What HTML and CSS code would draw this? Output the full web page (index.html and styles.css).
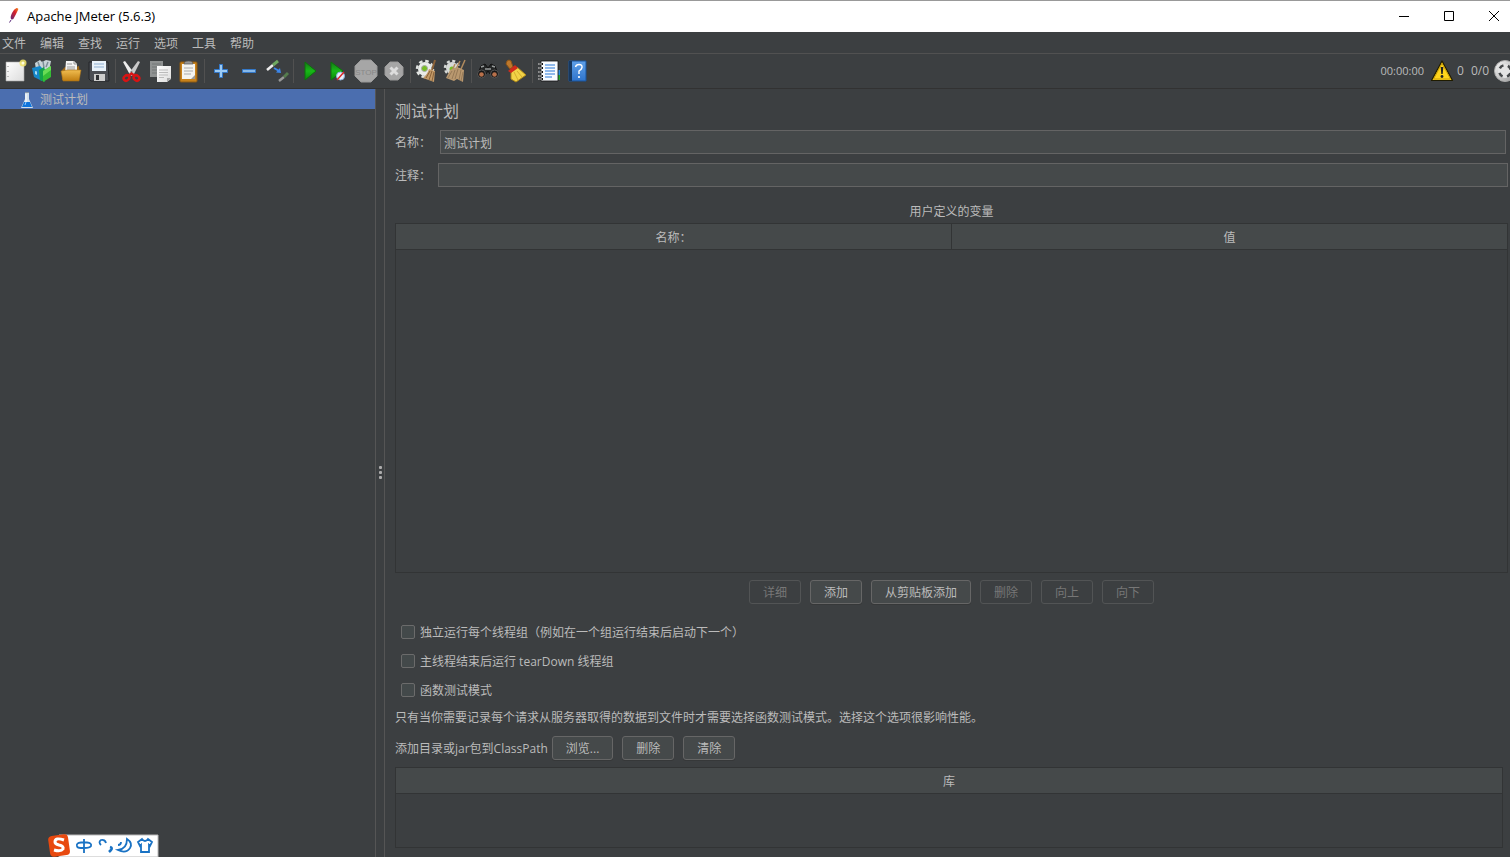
FILE: index.html
```html
<!DOCTYPE html>
<html lang="zh-CN">
<head>
<meta charset="utf-8">
<title>Apache JMeter (5.6.3)</title>
<link rel="stylesheet" href="styles.css">
</head>
<body>
<svg class="defs" aria-hidden="true">
  <defs>
    <linearGradient id="paper" x1="0" y1="0" x2="1" y2="1"><stop offset="0" stop-color="#fff"/><stop offset="1" stop-color="#dcdcdc"/></linearGradient>
    <linearGradient id="gold" x1="0" y1="0" x2="0" y2="1"><stop offset="0" stop-color="#f0bd50"/><stop offset="1" stop-color="#c07d10"/></linearGradient>
    <linearGradient id="green" x1="0" y1="0" x2="0" y2="1"><stop offset="0" stop-color="#157a15"/><stop offset=".5" stop-color="#18b818"/><stop offset="1" stop-color="#0a8a0a"/></linearGradient>
    <linearGradient id="blue" x1="0" y1="0" x2="0" y2="1"><stop offset="0" stop-color="#5fa0e8"/><stop offset="1" stop-color="#2f74cc"/></linearGradient>
    <linearGradient id="feather" x1="1" y1="0" x2="0" y2="1"><stop offset="0" stop-color="#f58a1f"/><stop offset=".4" stop-color="#d8222a"/><stop offset="1" stop-color="#5c2a7c"/></linearGradient>
    <linearGradient id="steel" x1="0" y1="0" x2="1" y2="1"><stop offset="0" stop-color="#f8f8f8"/><stop offset="1" stop-color="#999"/></linearGradient>
  </defs>
</svg>

<header class="titlebar">
  <svg class="app-icon" viewBox="0 0 16 16"><path d="M11.500 0Q14 0 13 2L10 8Q8 13 6 11Q5 9 7 5Q9 1 11.500 0Z" fill="url(#feather)"/><path d="M6 12L4.500 14.500" stroke="#5c2a7c" stroke-width="1"/></svg>
  <h1 class="app-title">Apache JMeter (5.6.3)</h1>
  <button class="win-btn" aria-label="最小化"><svg viewBox="0 0 10 10"><path d="M0 5.500H10"/></svg></button>
  <button class="win-btn" aria-label="最大化"><svg viewBox="0 0 10 10"><path d="M.5 .5H9.500V9.500H.5Z"/></svg></button>
  <button class="win-btn" aria-label="关闭"><svg viewBox="0 0 10 10"><path d="M0 0L10 10M10 0L0 10"/></svg></button>
</header>

<nav class="menubar">
  <button>文件</button><button>编辑</button><button>查找</button><button>运行</button><button>选项</button><button>工具</button><button>帮助</button>
</nav>

<div class="toolbar">
  <button class="tool" aria-label="新建"><svg viewBox="0 0 24 24"><path d="M3 3H21V22H3Z" fill="url(#paper)" stroke="#aaa" stroke-width=".6"/><path d="M5 7V8M5 12V13M5 17V18" stroke="#aaa" stroke-width="1.500"/><circle cx="20" cy="4" r="3.500" fill="#f1e46a" opacity=".85"/><circle cx="20" cy="4" r="1.500" fill="#fffde0"/></svg></button>
  <button class="tool" aria-label="模板"><svg viewBox="0 0 24 24"><path d="M4 4L9 1L11 3L15 1L20 2L18 12L5 11Z" fill="#c8d4d8"/><path d="M7 3L9 9M12 2L13 9M17 3L15 8" stroke="#7c8d96" stroke-width="1.500"/><path d="M1 9L9 7L11 9V22L3 18Z" fill="#1687c9"/><path d="M4 12L6 12.500V16L4 15Z" fill="#a5dcf5"/><path d="M8 11L13 8L14 11V23L9 21Z" fill="#13a34b"/><path d="M12 12L20 7V18L12 23Z" fill="#35bd35"/><path d="M12 12L20 7V11L12 17Z" fill="#69dc55"/></svg></button>
  <button class="tool" aria-label="打开"><svg viewBox="0 0 24 24"><path d="M3 11L6 8H17L20 7L21 18L18 21H3Z" fill="#9b6718"/><path d="M7 2H15L18 5V14H6Z" fill="#f3f3f3"/><path d="M15 2V5H18M8 5H13M8 8H16M8 10H16" stroke="#999" fill="none"/><path d="M2 12L9 11H22L20 22H4Z" fill="url(#gold)" stroke="#a87015" stroke-width=".6"/></svg></button>
  <button class="tool" aria-label="保存"><svg viewBox="0 0 24 24"><path d="M2 3H21L22 22H4L2 20Z" fill="#4b4e54" stroke="#25272b"/><path d="M5 2H19V12H5Z" fill="#e9f2fa"/><path d="M7 5H17M7 8H17" stroke="#8fafd2"/><path d="M7 15H18V22H7Z" fill="#ccc"/><path d="M9 16H12V21H9Z" fill="#303236"/></svg></button>
  <span class="sep"></span>
  <button class="tool" aria-label="剪切"><svg viewBox="0 0 24 24"><path d="M3 3L5 2L14 14L12 17L9 14Z" fill="#eee"/><path d="M20 3L18 2L9 14L11 17L14 15Z" fill="#c9c9c9"/><circle cx="11.500" cy="13" r="1" fill="#777"/><g fill="none" stroke="#d81414" stroke-width="2.500"><ellipse cx="6.500" cy="19" rx="3" ry="2.500" transform="rotate(-40 6.500 19)"/><ellipse cx="16.500" cy="19" rx="3" ry="2.500" transform="rotate(40 16.500 19)"/><path d="M8 17L11.500 14.500L15 17"/></g></svg></button>
  <button class="tool" aria-label="复制"><svg viewBox="0 0 24 24"><path d="M2 2H15V18H2Z" fill="#8f9292"/><path d="M4 5H13M4 8H13M4 11H13M4 14H13" stroke="#737777"/><path d="M9 7H23V20L19 23H9Z" fill="url(#paper)"/><path d="M11 11H20M11 13.500H20M11 16H20M11 18.500H16" stroke="#bbb"/><path d="M23 19H19V23Z" fill="#aaa"/></svg></button>
  <button class="tool" aria-label="粘贴"><svg viewBox="0 0 24 24"><rect x="4" y="3" width="17" height="20" rx="1" fill="#c8821b" stroke="#8e5a12"/><path d="M6 5H19V20H6Z" fill="#f4f4f0"/><path d="M8 5Q8 2 12.500 2Q17 2 17 5Z" fill="#999" stroke="#555" stroke-width=".7"/><path d="M8 9H17M8 12H17M8 15H15" stroke="#aaa"/><path d="M19 16V20H15Z" fill="#999"/></svg></button>
  <span class="sep"></span>
  <button class="tool" aria-label="全部展开"><svg viewBox="0 0 24 24"><path d="M10.500 5.500H13.500V10.500H18.500V13.500H13.500V18.500H10.500V13.500H5.500V10.500H10.500Z" fill="#9ccbf5" stroke="#3478c8"/></svg></button>
  <button class="tool" aria-label="全部折叠"><svg viewBox="0 0 24 24"><path d="M5.500 10.500H18.500V13.500H5.500Z" fill="#87b8e8" stroke="#3478c8"/></svg></button>
  <button class="tool" aria-label="切换"><svg viewBox="0 0 24 24"><path d="M2 11L8 6" stroke="#eee" stroke-width="2.500"/><path d="M8 6L13 2" stroke="#6fa961" stroke-width="3"/><path d="M9 9L14 12" stroke="#3c86e8" stroke-width="2"/><path d="M16 14L11 13.500L15 9Z" fill="#3c86e8"/><path d="M14 22L19 18" stroke="#999" stroke-width="2.500"/><path d="M19 18L23 14" stroke="#557c4e" stroke-width="3"/></svg></button>
  <span class="sep"></span>
  <button class="tool" aria-label="启动"><svg viewBox="0 0 24 24"><path d="M7 3L18 12L7 21Z" fill="url(#green)" stroke="#0c720c"/></svg></button>
  <button class="tool" aria-label="不停顿启动"><svg viewBox="0 0 24 24"><path d="M5 3L17 12L5 21Z" fill="url(#green)" stroke="#0c720c"/><circle cx="14.500" cy="17" r="4" fill="#e8f0fa" stroke="#88b2df"/><path d="M11 21L18 13" stroke="#d92727" stroke-width="1.500"/></svg></button>
  <button class="tool" aria-label="停止" disabled><svg viewBox="0 0 24 24"><path d="M7 1H17L23 7V17L17 23H7L1 17V7Z" fill="#a6a6a6" stroke="#999"/><text x="12" y="16" text-anchor="middle" class="stop-text">STOP</text></svg></button>
  <button class="tool" aria-label="关闭" disabled><svg viewBox="0 0 24 24"><path d="M8 3H16L21 8V16L16 21H8L3 16V8Z" fill="#a6a6a6" stroke="#999"/><path d="M8.500 8.500L15.500 15.500M15.500 8.500L8.500 15.500" stroke="#ddd" stroke-width="3"/></svg></button>
  <span class="sep"></span>
  <button class="tool" aria-label="清除"><svg viewBox="0 0 24 24"><circle cx="10" cy="10" r="7" fill="#e9ece9"/><circle cx="10" cy="10" r="8" fill="none" stroke="#e1e4e1" stroke-width="2.500" stroke-dasharray="3.500 2.780"/><circle cx="9.500" cy="9.500" r="3" fill="#77bd25" stroke="#aaa"/><path d="M20 1L17 11" stroke="#8b6239" stroke-width="2"/><path d="M14 10L20 12L19 23L8 19Q12 16 14 10Z" fill="#c39a68"/><path d="M15 12L11 19M17 12L14 21M19 13L17 22" stroke="#896239"/></svg></button>
  <button class="tool" aria-label="清除全部"><svg viewBox="0 0 24 24"><circle cx="9" cy="9" r="6" fill="#d7dad7"/><circle cx="9" cy="9" r="7" fill="none" stroke="#d7dad7" stroke-width="2.500" stroke-dasharray="3 2.500"/><circle cx="9" cy="10" r="2.500" fill="#77bd25"/><path d="M22 1L18 10M17 2L13 10M12 5L9 12" stroke="#b18b5e" stroke-width="1.500"/><path d="M7 11L14 8L21 11L20 23L14 20L11 22L3 19Z" fill="#b9986f"/><path d="M9 12L5 19M12 11L9 20M15 10L12 20M18 11L16 21M20 13L18 22" stroke="#967957"/></svg></button>
  <span class="sep"></span>
  <button class="tool" aria-label="查找"><svg viewBox="0 0 24 24"><path d="M5 7L9 5L12 9L15 5L19 7L22 15H14L12 12L10 15H2Z" fill="#242626" stroke="#111"/><path d="M5 8L8 7M16 7L19 8M9 10H15" stroke="#979b9b" stroke-width="1.500"/><circle cx="5.500" cy="15" r="4" fill="#161616" stroke="#555"/><circle cx="18.500" cy="15" r="4" fill="#161616" stroke="#555"/><circle cx="5.500" cy="15.500" r="2.300" fill="#b9714b"/><circle cx="18.500" cy="15.500" r="2.300" fill="#b9714b"/></svg></button>
  <button class="tool" aria-label="重置查找"><svg viewBox="0 0 24 24"><path d="M3 2Q5 0 7 2L9 8L6 10L2 5Z" fill="#bc782c" stroke="#8d5418"/><path d="M7 12L13 8L22 16L12 23L7 20Z" fill="#f2d347" stroke="#ad8719"/><path d="M10 13L14 21M13 12L18 18" stroke="#d3ad2c"/><path d="M4 12L11 6L14 9L7 14Z" fill="#d02b1c"/></svg></button>
  <span class="sep"></span>
  <button class="tool" aria-label="函数助手"><svg viewBox="0 0 24 24"><path d="M20 11H23V16H20Z" fill="#2c8be0"/><path d="M20 16H23V21H20Z" fill="#25a52e"/><path d="M4 2H21V22H4Z" fill="#f8fbff" stroke="#111" stroke-width=".8"/><path d="M8 6H18M8 9H18M8 12H18M8 15H18M8 18H15" stroke="#2878d8" stroke-width="1.200"/><path d="M2 5H6M2 9H6M2 13H6M2 17H6M2 20H6" stroke="#111" stroke-width="2"/><path d="M1 5H5M1 9H5M1 13H5M1 17H5M1 20H5" stroke="#ddd"/></svg></button>
  <button class="tool" aria-label="帮助"><svg viewBox="0 0 24 24"><path d="M4 2H21V22H4Z" fill="url(#blue)" stroke="#18549d"/><path d="M4 2H7V22H4Z" fill="#17385f"/><path d="M10.500 8Q11 5.500 14 5.500Q17.500 5.500 17 8.500Q16.500 10.500 14 12V15" fill="none" stroke="#fff" stroke-width="1.400"/><circle cx="14" cy="18" r="1.100" fill="#fff"/></svg></button>
  <div class="status">
    <span class="time">00:00:00</span>
    <button class="warn" aria-label="警告"><svg viewBox="0 0 24 24"><path d="M12 2L22.500 21.500H1.500Z" fill="#ffd51c" stroke="#1f1b00" stroke-width="1.200" stroke-linejoin="round"/><path d="M12 4.500L20.500 20H3.500Z" fill="none" stroke="#b48900" stroke-width=".7"/><path d="M10.700 8H13.300L12.700 15H11.300Z" fill="#222"/><circle cx="12" cy="17.500" r="1.400" fill="#222"/></svg></button>
    <span class="errors">0</span><span class="threads">0/0</span>
    <svg class="round" viewBox="0 0 22 22"><circle cx="11" cy="11" r="10.500" fill="url(#steel)" stroke="#aaa"/><circle cx="11" cy="11" r="7" fill="#e4e4e4"/><circle cx="11" cy="11" r="5.800" fill="none" stroke="#45484a" stroke-width="2.500" stroke-dasharray="4.500 4.610" stroke-dashoffset="-2.300"/></svg>
  </div>
</div>

<main class="workspace">
  <aside class="tree">
    <button class="tree-item"><svg viewBox="0 0 14 18"><path d="M5 2H9V8L13 17H1L5 8Z" fill="#d3e0ec"/><path d="M4 11H10L12 16H2Z" fill="#0f74dc"/><path d="M6 3V11" stroke="#fff"/><path d="M5 1.500H9" stroke="#8796a5"/><path d="M6 11L5 14" stroke="#8fc8ff"/></svg>测试计划</button>
  </aside>
  <div class="divider" role="separator"><i></i><i></i><i></i></div>
  <section class="panel">
    <h2>测试计划</h2>
    <div class="field name-field"><label for="name">名称：</label><input id="name" type="text" value="测试计划"></div>
    <div class="field"><label for="comment">注释：</label><input id="comment" type="text"></div>
    <h3>用户定义的变量</h3>
    <div class="table-box vars"><table><thead><tr><th>名称：</th><th>值</th></tr></thead></table></div>
    <div class="actions">
      <button class="btn" disabled>详细</button><button class="btn">添加</button><button class="btn">从剪贴板添加</button><button class="btn" disabled>删除</button><button class="btn" disabled>向上</button><button class="btn" disabled>向下</button>
    </div>
    <div class="checks">
      <label><input type="checkbox"><span>独立运行每个线程组（例如在一个组运行结束后启动下一个）</span></label>
      <label><input type="checkbox"><span>主线程结束后运行 tearDown 线程组</span></label>
      <label><input type="checkbox"><span>函数测试模式</span></label>
    </div>
    <p class="note">只有当你需要记录每个请求从服务器取得的数据到文件时才需要选择函数测试模式。选择这个选项很影响性能。</p>
    <div class="classpath"><span>添加目录或jar包到ClassPath</span><button class="btn">浏览...</button><button class="btn">删除</button><button class="btn">清除</button></div>
    <div class="table-box libs"><table><thead><tr><th>库</th></tr></thead></table></div>
  </section>
</main>

<div class="ime">
  <svg viewBox="0 0 112 24"><path d="M12 2H111V24H12Z" fill="#fff" stroke="#bbb"/><rect x="2" y="2" width="20" height="21" rx="4" fill="#e8490f" transform="rotate(-8 12 12)"/><path d="M17 7Q8 4 8 9Q8 11 12 12Q17 13 16 16Q14 19 7 17" fill="none" stroke="#fff" stroke-width="3"/><g fill="none" stroke="#1972c4" stroke-width="1.800"><path d="M37 6V20M30 13Q29 10 34 9.500H40Q45 10 44 13Q43 15 37 15H34Q30 15 30 13"/><path d="M54 12Q51 9 54 7Q58 6 59 10"/><path d="M63 14Q66 15 64 17L62 19" stroke-width="2.500"/><path d="M80 6Q86 10 83 15Q79 21 71 17Q80 16 80 6ZM71 12Q74 12 74 9"/><path d="M95 6Q98 10 101 6L105 9L103 13L102 12V19H94V12L93 13L91 9Z"/></g></svg>
</div>
</body>
</html>
```
FILE: styles.css
```css
* { box-sizing: border-box; }

body {
  margin: 0;
  height: 100vh;
  display: flex;
  flex-direction: column;
  overflow: hidden;
  background: #3c3f41;
  color: #bbb;
  font: 12px/16px "Open Sans", "Noto Sans CJK SC", sans-serif;
}

button, input { font: inherit; color: inherit; }
button { margin: 0; padding: 0; border: 0; background: none; }
h1, h2, h3, p { margin: 0; font-weight: 400; }
svg { display: block; }
.defs { position: absolute; width: 0; height: 0; }

.titlebar {
  display: flex;
  align-items: center;
  gap: 14px;
  height: 32px;
  flex: none;
  padding: 0 1px 1px 5px;
  background: #fff;
  border-top: 1px solid #999;
  color: #000;
}
.app-icon { width: 16px; height: 16px; }
.app-title { flex: 1; margin-left: -8px; font-size: 13px; }
.win-btn { width: 31px; height: 30px; display: grid; place-items: center; }
.win-btn svg { width: 10px; height: 10px; fill: none; stroke: #000; overflow: visible; }

.menubar {
  display: flex;
  gap: 14px;
  flex: none;
  height: 22px;
  padding: 2px 0 0 2px;
  border-bottom: 1px solid #515151;
}

.toolbar {
  display: flex;
  align-items: center;
  flex: none;
  height: 35px;
  padding-left: 1px;
  border-bottom: 1px solid #323232;
  overflow: hidden;
}
.tool { width: 28px; height: 28px; display: grid; place-items: center; flex: none; }
.tool svg { width: 24px; height: 24px; }
.sep { width: 1px; height: 24px; margin: 0 2px; background: #515151; flex: none; }
.stop-text { font: 8px "Liberation Sans", sans-serif; fill: #888; }
.status { display: flex; align-items: center; margin-left: auto; flex: none; margin-right: -6px; }
.time { font-size: 11px; }
.warn { margin-left: 6px; }
.warn svg { width: 24px; height: 24px; }
.errors { margin-left: 3px; }
.threads { margin: 0 5px 0 7px; }
.round { width: 22px; height: 22px; }

.workspace { flex: 1; min-height: 0; display: flex; }
.tree { width: 376px; flex: none; border-right: 1px solid #555; }
.tree-item {
  display: flex;
  align-items: center;
  gap: 6px;
  width: 100%;
  height: 20px;
  padding: 2px 0 0 20px;
  background: #4b6eaf;
}
.tree-item svg { width: 14px; height: 18px; }
.divider {
  width: 9px;
  flex: none;
  display: flex;
  flex-direction: column;
  align-items: center;
  justify-content: center;
  gap: 2px;
  padding-bottom: 2px;
  border-right: 1px solid #555;
}
.divider i { width: 3px; height: 3px; border-radius: 1px; background: #adadad; }

.panel { flex: 1; min-width: 0; display: flex; flex-direction: column; padding: 10px 2px 9px 10px; }
h2 { font-size: 16px; line-height: 24px; margin-bottom: 7px; }
.field { display: flex; align-items: center; margin-bottom: 9px; }
.field label { width: 43px; flex: none; padding-top: 2px; }
.name-field label { width: 45px; }
.name-field { padding-right: 2px; }
.field input {
  flex: 1;
  min-width: 0;
  height: 24px;
  padding: 2px 3px 0;
  border: 1px solid #646464;
  background: #45494a;
  outline: 0;
}
h3 { font-size: 12px; text-align: center; margin: 8px 0 3px; }

.table-box { border: 1px solid #323435; }
.vars { flex: 1; min-height: 0; }
table { width: 100%; border-collapse: collapse; table-layout: fixed; }
th {
  height: 25px;
  padding: 4px 0 0;
  background: #45494a;
  border-bottom: 1px solid #323435;
  font-weight: 400;
}
th + th { border-left: 1px solid #323435; }

.btn {
  height: 24px;
  min-width: 52px;
  padding: 2px 13px 0;
  border: 1px solid #666;
  border-radius: 3px;
  background: #45494a;
  box-shadow: 0 1px 0 #363839;
}
.btn:disabled { background: none; border-color: #525455; color: #777; box-shadow: none; }
.actions { display: flex; justify-content: center; gap: 9px; margin: 7px 0 16px; }

.checks { display: flex; flex-direction: column; gap: 5px; padding-left: 6px; }
.checks label { display: flex; align-items: center; height: 24px; gap: 5px; }
.checks span { padding-top: 2px; }
.checks input {
  appearance: none;
  width: 14px;
  height: 14px;
  margin: 0;
  border: 1px solid #6b6b6b;
  border-radius: 2px;
  background: #43494a;
}
.note { margin: 8px 0 10px; }
.classpath { display: flex; align-items: center; gap: 9px; margin-bottom: 7px; }
.classpath span { margin-right: -5px; padding-top: 2px; }
.libs { height: 81px; margin-right: 5px; }

.ime { position: absolute; left: 47px; bottom: 0; width: 112px; height: 24px; }
.ime svg { width: 112px; height: 24px; }
```
